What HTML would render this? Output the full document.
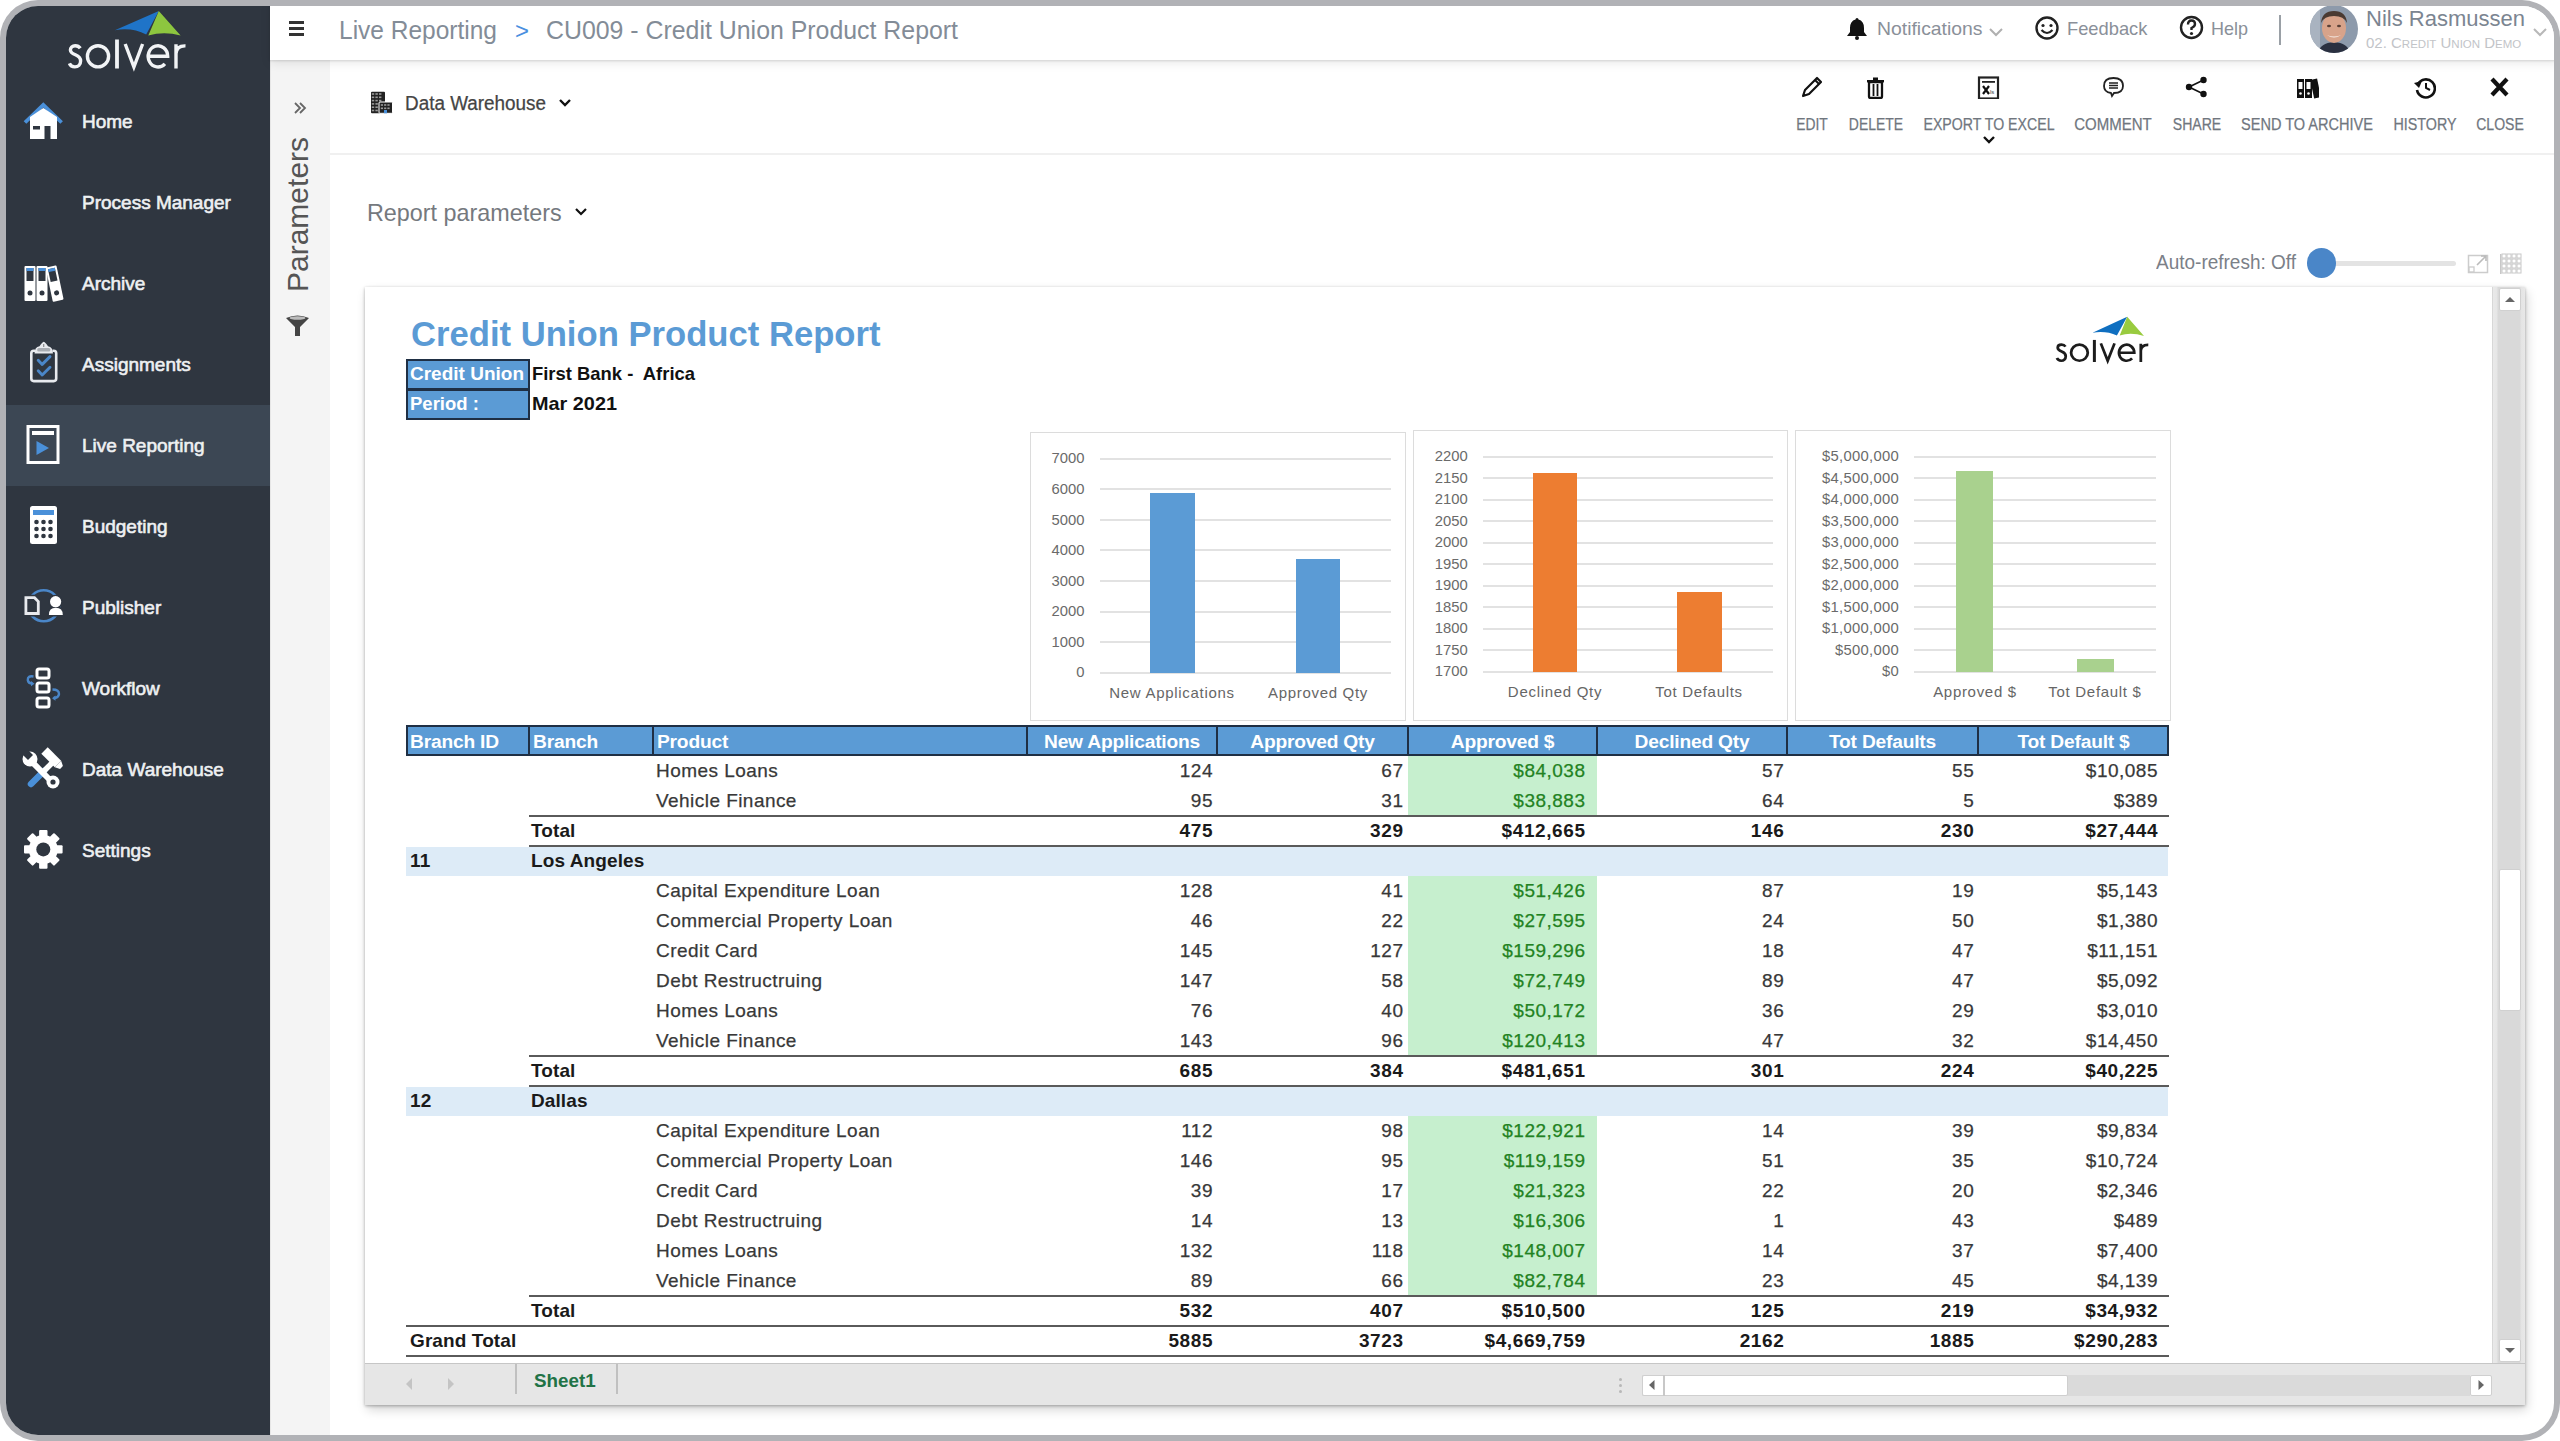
<!DOCTYPE html>
<html><head><meta charset="utf-8"><title>Credit Union Product Report</title>
<style>
html,body{margin:0;padding:0;background:#ffffff;width:2560px;height:1441px;overflow:hidden;}
body{font-family:'Liberation Sans',sans-serif;}
.frame{position:absolute;left:0;top:0;width:2560px;height:1441px;border-radius:38px;background:#b1b2b6;}
.inner{position:absolute;left:6px;top:6px;width:2548px;height:1429px;border-radius:32px;overflow:hidden;background:#ffffff;}
.page{position:absolute;left:-6px;top:-6px;width:2560px;height:1441px;}
</style></head>
<body>
<div class="frame"></div>
<div class="inner"><div class="page">
<div style="position:absolute;left:0px;top:0px;width:270px;height:1441px;background:#2f3640;"></div>
<div style="position:absolute;left:0px;top:405px;width:270px;height:81px;background:#3c4754;"></div>
<svg style="position:absolute;left:0;top:0" width="270" height="80"><path d="M114.9 30.2 L158.8 10.9 L146.2 34.5 Q132 27 114.9 30.2 Z" fill="#1f74c8"/><path d="M158.8 10.9 L180.6 35.5 Q164 31 148.3 35.5 Z" fill="#8dc63f"/><g fill="none" stroke="#f2f4f6" stroke-width="3.4"><path d="M80.3 48.3 C79 46.3 77.3 45.7 75.2 45.7 C72.3 45.7 70.4 47.5 70.4 49.9 C70.4 52.6 72.6 53.6 75.4 54.8 C78.6 56.1 80.6 57.6 80.6 61 C80.6 64.6 78.2 66.9 74.8 66.9 C72.2 66.9 70.3 65.6 69.4 63.4"/><ellipse cx="98" cy="56.3" rx="10.6" ry="10.6"/><path d="M117 39.4 V68.6" stroke-width="3.8"/><path d="M125.2 44 L133.9 67 L142.6 44" stroke-linejoin="miter"/><path d="M148.2 56.3 H167.7 A9.75 10.6 0 1 0 164.9 63.8"/><path d="M176 44.3 V68.6 M176 53.5 C176.5 47.5 180 45.7 185.5 45.9"/></g></svg>
<div style="position:absolute;top:111.92px;font-size:19px;line-height:19px;color:#eef0f2;font-weight:400;white-space:nowrap;left:82px;-webkit-text-stroke:0.6px #eef0f2;">Home</div>
<div style="position:absolute;top:192.92px;font-size:19px;line-height:19px;color:#eef0f2;font-weight:400;white-space:nowrap;left:82px;-webkit-text-stroke:0.6px #eef0f2;">Process Manager</div>
<div style="position:absolute;top:273.92px;font-size:19px;line-height:19px;color:#eef0f2;font-weight:400;white-space:nowrap;left:82px;-webkit-text-stroke:0.6px #eef0f2;">Archive</div>
<div style="position:absolute;top:354.92px;font-size:19px;line-height:19px;color:#eef0f2;font-weight:400;white-space:nowrap;left:82px;-webkit-text-stroke:0.6px #eef0f2;">Assignments</div>
<div style="position:absolute;top:435.92px;font-size:19px;line-height:19px;color:#eef0f2;font-weight:400;white-space:nowrap;left:82px;-webkit-text-stroke:0.6px #eef0f2;">Live Reporting</div>
<div style="position:absolute;top:516.92px;font-size:19px;line-height:19px;color:#eef0f2;font-weight:400;white-space:nowrap;left:82px;-webkit-text-stroke:0.6px #eef0f2;">Budgeting</div>
<div style="position:absolute;top:597.92px;font-size:19px;line-height:19px;color:#eef0f2;font-weight:400;white-space:nowrap;left:82px;-webkit-text-stroke:0.6px #eef0f2;">Publisher</div>
<div style="position:absolute;top:678.92px;font-size:19px;line-height:19px;color:#eef0f2;font-weight:400;white-space:nowrap;left:82px;-webkit-text-stroke:0.6px #eef0f2;">Workflow</div>
<div style="position:absolute;top:759.92px;font-size:19px;line-height:19px;color:#eef0f2;font-weight:400;white-space:nowrap;left:82px;-webkit-text-stroke:0.6px #eef0f2;">Data Warehouse</div>
<div style="position:absolute;top:840.92px;font-size:19px;line-height:19px;color:#eef0f2;font-weight:400;white-space:nowrap;left:82px;-webkit-text-stroke:0.6px #eef0f2;">Settings</div>
<svg style="position:absolute;left:0;top:0" width="270" height="1441"><path d="M25 122.5 L43.3 105 L61.6 122.5" fill="none" stroke="#4a90d9" stroke-width="3.8"/><path d="M30 117 L43.3 108 L57 117 L57 139 L30 139 Z" fill="#fff"/><rect x="44.5" y="126" width="6" height="13" fill="#2f3640"/><rect x="33" y="126" width="7" height="3.5" fill="#2f3640"/><g><rect x="24.5" y="266" width="11" height="35" rx="1" fill="#fff"/><rect x="36.5" y="266" width="11" height="35" rx="1" fill="#fff"/><g transform="rotate(-12 55 283)"><rect x="49" y="266" width="11" height="35" rx="1" fill="#fff"/><rect x="51" y="268" width="7" height="13" fill="#2f3640"/><rect x="51" y="268" width="7" height="3" fill="#4a90d9"/><circle cx="54.5" cy="293" r="2.5" fill="#2f3640"/></g><rect x="26.5" y="268" width="7" height="13" fill="#2f3640"/><rect x="26.5" y="268" width="7" height="3" fill="#4a90d9"/><rect x="38.5" y="268" width="7" height="13" fill="#2f3640"/><rect x="38.5" y="268" width="7" height="3" fill="#4a90d9"/><circle cx="30" cy="293" r="2.5" fill="#2f3640"/><circle cx="42" cy="293" r="2.5" fill="#2f3640"/></g><path d="M35 350.8 H33.8 Q31.3 350.8 31.3 353.3 V378.6 Q31.3 381.1 33.8 381.1 H53.7 Q56.2 381.1 56.2 378.6 V353.3 Q56.2 350.8 53.7 350.8 H52.5" stroke="#e8eaee" stroke-width="2.6" fill="none"/><path d="M34.6 353.6 Q34.4 347.3 39.5 346.3 Q42 342.3 43.75 341.8 Q45.5 342.3 48 346.3 Q53 347.3 52.9 353.6 Z" fill="#e8eaee"/><rect x="37.2" y="348" width="13.2" height="3.6" rx="1.6" fill="#a9adb3"/><path d="M43.75 344 V347" stroke="#555" stroke-width="0.8"/><path d="M38.2 360.2 L42.2 364.4 L50 356.6 M38.2 370.8 L42.2 375 L50 367.2" stroke="#4a86c8" stroke-width="2.9" fill="none" stroke-linecap="round" stroke-linejoin="round"/><rect x="28" y="426.5" width="30" height="36" fill="none" stroke="#fff" stroke-width="3"/><rect x="32" y="431" width="22" height="4" fill="#fff"/><path d="M36.5 441 L49 448 L36.5 455 Z" fill="#4a90d9"/><rect x="30" y="506" width="27" height="38" rx="2.5" fill="#fff"/><rect x="33" y="510" width="21" height="5" fill="#4a90d9"/><circle cx="36.5" cy="522" r="2.3" fill="#2f3640"/><circle cx="43.5" cy="522" r="2.3" fill="#2f3640"/><circle cx="50.5" cy="522" r="2.3" fill="#2f3640"/><circle cx="36.5" cy="529" r="2.3" fill="#2f3640"/><circle cx="43.5" cy="529" r="2.3" fill="#2f3640"/><circle cx="50.5" cy="529" r="2.3" fill="#2f3640"/><circle cx="36.5" cy="536" r="2.3" fill="#2f3640"/><circle cx="43.5" cy="536" r="2.3" fill="#2f3640"/><circle cx="50.5" cy="536" r="2.3" fill="#2f3640"/><circle cx="43.75" cy="605.8" r="15.5" fill="none" stroke="#4a86c8" stroke-width="2.6"/><path d="M25.9 597.7 L34.5 597.7 L38.3 601.5 L38.3 613.5 L25.9 613.5 Z" fill="#2f3640" stroke="#2f3640" stroke-width="6"/><path d="M25.9 597.7 L34.5 597.7 L38.3 601.5 L38.3 613.5 L25.9 613.5 Z" fill="none" stroke="#e8eaee" stroke-width="2.8" stroke-linejoin="miter"/><circle cx="55.4" cy="601.7" r="7" fill="#2f3640"/><path d="M47 616.5 Q47 606 55.8 606 Q64.5 606 64.5 616.5 Z" fill="#2f3640"/><circle cx="55.6" cy="601.7" r="5.6" fill="#fff"/><path d="M48.9 615 Q48.9 607.8 55.8 607.8 Q62.8 607.8 62.8 615 Z" fill="#fff"/><rect x="37" y="669" width="12" height="9" rx="2" fill="none" stroke="#fff" stroke-width="3"/><rect x="37" y="683" width="12" height="9" rx="2" fill="none" stroke="#fff" stroke-width="3"/><rect x="37" y="698" width="12" height="9" rx="2" fill="none" stroke="#fff" stroke-width="3"/><path d="M33.5 676.5 Q27.5 675.5 27.8 680 Q28.2 683.5 32.5 683.5" fill="none" stroke="#4a86c8" stroke-width="2.4"/><path d="M31 681 L34.5 683.8 L31 686.2 Z" fill="#4a86c8"/><path d="M52.5 689.5 Q59 689.5 59 694 Q58.5 698 53.5 698" fill="none" stroke="#4a86c8" stroke-width="2.4"/><path d="M55.5 695.5 L52 698.2 L55.5 700.8 Z" fill="#4a86c8"/><path d="M31 784 L44 771" stroke="#4a90d9" stroke-width="6.5" stroke-linecap="round"/><path d="M42 773 L53 762" stroke="#fff" stroke-width="5.5"/><g transform="translate(53 759) rotate(45)"><rect x="-12" y="-4.5" width="19" height="9" fill="#fff"/><path d="M7 -4.5 L12 -2 L12 2 L7 4.5 Z" fill="#fff"/></g><path d="M31 761 L52 782" stroke="#fff" stroke-width="6"/><circle cx="30" cy="759" r="7.5" fill="#fff"/><path d="M22 754 L28 760 L33 755 L27 749 Z" fill="#2f3640"/><circle cx="53" cy="782" r="6.5" fill="#fff"/><circle cx="53" cy="782" r="2.6" fill="#2f3640"/><g transform="translate(43.3 849.4)"><circle r="14.5" fill="#fff"/><rect x="-4.2" y="-19.3" width="8.4" height="8" rx="1" fill="#fff" transform="rotate(0)"/><rect x="-4.2" y="-19.3" width="8.4" height="8" rx="1" fill="#fff" transform="rotate(45)"/><rect x="-4.2" y="-19.3" width="8.4" height="8" rx="1" fill="#fff" transform="rotate(90)"/><rect x="-4.2" y="-19.3" width="8.4" height="8" rx="1" fill="#fff" transform="rotate(135)"/><rect x="-4.2" y="-19.3" width="8.4" height="8" rx="1" fill="#fff" transform="rotate(180)"/><rect x="-4.2" y="-19.3" width="8.4" height="8" rx="1" fill="#fff" transform="rotate(225)"/><rect x="-4.2" y="-19.3" width="8.4" height="8" rx="1" fill="#fff" transform="rotate(270)"/><rect x="-4.2" y="-19.3" width="8.4" height="8" rx="1" fill="#fff" transform="rotate(315)"/><circle r="7" fill="#2f3640"/></g></svg>
<div style="position:absolute;left:270px;top:0px;width:2290px;height:60px;background:#ffffff;box-shadow:0 1px 2px rgba(0,0,0,0.12), 0 3px 10px rgba(0,0,0,0.09);z-index:2;"></div>
<div style="position:absolute;left:0;top:0;width:2560px;height:60px;z-index:3">
<div style="position:absolute;left:289px;top:21px;width:15px;height:3px;background:#333;"></div>
<div style="position:absolute;left:289px;top:27px;width:15px;height:3px;background:#333;"></div>
<div style="position:absolute;left:289px;top:33px;width:15px;height:3px;background:#333;"></div>
<div style="position:absolute;top:17.91px;font-size:25.5px;line-height:25.5px;color:#838c97;font-weight:400;white-space:nowrap;left:339px;transform:scaleX(0.9609);transform-origin:left;">Live Reporting</div>
<div style="position:absolute;top:19.18px;font-size:24px;line-height:24px;color:#4a8fe0;font-weight:400;white-space:nowrap;left:515px;">&gt;</div>
<div style="position:absolute;top:17.91px;font-size:25.5px;line-height:25.5px;color:#838c97;font-weight:400;white-space:nowrap;left:546px;transform:scaleX(0.9755);transform-origin:left;">CU009 - Credit Union Product Report</div>
<svg style="position:absolute;left:1846px;top:16px" width="22" height="24" viewBox="0 0 22 24"><path d="M11 2 Q12.5 2 12.5 3.5 Q18 5 18 12 L18 16 L21 20 L1 20 L4 16 L4 12 Q4 5 9.5 3.5 Q9.5 2 11 2 Z" fill="#111"/><circle cx="11" cy="22" r="2" fill="#111"/></svg>
<div style="position:absolute;top:19.94px;font-size:18.5px;line-height:18.5px;color:#8a9099;font-weight:400;white-space:nowrap;left:1877px;transform:scaleX(1.047);transform-origin:left;">Notifications</div>
<svg style="position:absolute;left:1988px;top:26px" width="16" height="12" viewBox="0 0 16 12"><path d="M2 3 L8 9 L14 3" fill="none" stroke="#b0b0b0" stroke-width="2"/></svg>
<svg style="position:absolute;left:2034px;top:15px" width="26" height="26" viewBox="0 0 26 26"><circle cx="13" cy="13" r="10.5" fill="none" stroke="#222" stroke-width="2.4"/><circle cx="9" cy="10.5" r="1.6" fill="#222"/><circle cx="17" cy="10.5" r="1.6" fill="#222"/><path d="M7.5 15 Q13 21 18.5 15" fill="none" stroke="#222" stroke-width="2.2"/></svg>
<div style="position:absolute;top:19.94px;font-size:18.5px;line-height:18.5px;color:#8a9099;font-weight:400;white-space:nowrap;left:2067px;transform:scaleX(0.9895);transform-origin:left;">Feedback</div>
<svg style="position:absolute;left:2178px;top:14px" width="27" height="27" viewBox="0 0 27 27"><circle cx="13.5" cy="13.5" r="10.5" fill="none" stroke="#222" stroke-width="2.4"/><path d="M10 10.5 Q10 6.5 13.5 6.5 Q17 6.5 17 10 Q17 12.5 13.5 14 L13.5 16" fill="none" stroke="#222" stroke-width="2.4"/><circle cx="13.5" cy="19.5" r="1.6" fill="#222"/></svg>
<div style="position:absolute;top:19.94px;font-size:18.5px;line-height:18.5px;color:#8a9099;font-weight:400;white-space:nowrap;left:2211px;transform:scaleX(0.9721);transform-origin:left;">Help</div>
<div style="position:absolute;left:2279px;top:15px;width:2px;height:30px;background:#9aa0a6;"></div>
<svg style="position:absolute;left:2310px;top:5px" width="48" height="48" viewBox="0 0 48 48"><defs><clipPath id="av"><circle cx="24" cy="24" r="24"/></clipPath></defs><g clip-path="url(#av)"><rect width="48" height="48" fill="#8d9aab"/><rect x="0" y="0" width="10" height="48" fill="#a9b3c0"/><path d="M8 48 Q10 38 24 37 Q38 38 40 48 Z" fill="#2a3040"/><ellipse cx="24" cy="23" rx="12" ry="15" fill="#d8a38a"/><path d="M11 18 Q12 6 24 6 Q36 6 37 18 Q34 11 24 11 Q14 11 11 18 Z" fill="#4a3a32"/><ellipse cx="19" cy="21" rx="2" ry="1.2" fill="#5a4036"/><ellipse cx="29" cy="21" rx="2" ry="1.2" fill="#5a4036"/><path d="M17 30 Q24 35 31 30 Q24 33 17 30 Z" fill="#f5ece6"/></g></svg>
<div style="position:absolute;top:7.78px;font-size:22px;line-height:22px;color:#7b8591;font-weight:400;white-space:nowrap;left:2366px;transform:scaleX(1.0004);transform-origin:left;">Nils Rasmussen</div>
<div style="position:absolute;top:35.30px;font-size:15px;line-height:15px;color:#c2c4c8;font-weight:400;white-space:nowrap;left:2366px;">02. C<span style="font-size:11.5px">REDIT</span> U<span style="font-size:11.5px">NION</span> D<span style="font-size:11.5px">EMO</span></div>
<svg style="position:absolute;left:2532px;top:26px" width="16" height="12" viewBox="0 0 16 12"><path d="M2 3 L8 9 L14 3" fill="none" stroke="#b8b8b8" stroke-width="2"/></svg>
</div>
<div style="position:absolute;left:270px;top:60px;width:60px;height:1381px;background:#f4f4f4;border-left:1px solid #e6e6e6;box-sizing:border-box;"></div>
<svg style="position:absolute;left:293px;top:101px" width="14" height="14" viewBox="0 0 14 14"><path d="M2 2 L7 7 L2 12 M7 2 L12 7 L7 12" fill="none" stroke="#666" stroke-width="1.8"/></svg>
<div style="position:absolute;left:285.5px;top:292px;transform-origin:0 0;transform:rotate(-90deg);font-size:30px;line-height:30px;color:#555;white-space:nowrap;height:30px;"><span style="position:relative;top:-3px">Parameters</span></div>
<svg style="position:absolute;left:285px;top:314px" width="25" height="24" viewBox="0 0 25 24"><path d="M1 4 Q12.5 -1 24 4 L15 13 L15 22 L10 22 L10 13 Z" fill="#444"/><ellipse cx="12.5" cy="4" rx="8" ry="1.8" fill="#bbb"/></svg>
<div style="position:absolute;left:330px;top:153px;width:2224px;height:2px;background:#f0f0f0;"></div>
<svg style="position:absolute;left:370px;top:91px" width="24" height="24" viewBox="0 0 24 24"><rect x="1" y="0.8" width="14" height="21.5" rx="1" fill="#222"/><rect x="1.8" y="2.2" width="2.4" height="1.6" fill="#9a9a9a"/><rect x="5.4" y="2.2" width="2.4" height="1.6" fill="#9a9a9a"/><rect x="9.0" y="2.2" width="2.4" height="1.6" fill="#9a9a9a"/><rect x="1.8" y="5.5" width="2.4" height="1.6" fill="#9a9a9a"/><rect x="5.4" y="5.5" width="2.4" height="1.6" fill="#9a9a9a"/><rect x="9.0" y="5.5" width="2.4" height="1.6" fill="#9a9a9a"/><rect x="1.8" y="8.8" width="2.4" height="1.6" fill="#9a9a9a"/><rect x="5.4" y="8.8" width="2.4" height="1.6" fill="#9a9a9a"/><rect x="9.0" y="8.8" width="2.4" height="1.6" fill="#9a9a9a"/><rect x="1.8" y="12.1" width="2.4" height="1.6" fill="#9a9a9a"/><rect x="5.4" y="12.1" width="2.4" height="1.6" fill="#9a9a9a"/><rect x="9.0" y="12.1" width="2.4" height="1.6" fill="#9a9a9a"/><rect x="1.8" y="15.4" width="2.4" height="1.6" fill="#9a9a9a"/><rect x="5.4" y="15.4" width="2.4" height="1.6" fill="#9a9a9a"/><rect x="9.0" y="15.4" width="2.4" height="1.6" fill="#9a9a9a"/><rect x="1.8" y="18.7" width="2.4" height="1.6" fill="#9a9a9a"/><rect x="5.4" y="18.7" width="2.4" height="1.6" fill="#9a9a9a"/><rect x="9.0" y="18.7" width="2.4" height="1.6" fill="#9a9a9a"/><rect x="9" y="11" width="13.5" height="11.3" rx="1" fill="#222" stroke="#fff" stroke-width="1"/><rect x="10.8" y="13.2" width="2.2" height="1.6" fill="#9a9a9a"/><rect x="14.1" y="13.2" width="2.2" height="1.6" fill="#9a9a9a"/><rect x="17.4" y="13.2" width="2.2" height="1.6" fill="#9a9a9a"/><rect x="10.8" y="16.5" width="2.2" height="1.6" fill="#9a9a9a"/><rect x="14.1" y="16.5" width="2.2" height="1.6" fill="#9a9a9a"/><rect x="17.4" y="16.5" width="2.2" height="1.6" fill="#9a9a9a"/><rect x="14" y="19" width="3" height="3.3" fill="#4a90d9"/></svg>
<div style="position:absolute;top:93.07px;font-size:20px;line-height:20px;color:#444;font-weight:400;white-space:nowrap;left:405px;transform:scaleX(0.9441);transform-origin:left;-webkit-text-stroke:0.25px #444;">Data Warehouse</div>
<svg style="position:absolute;left:558px;top:97px" width="14" height="12" viewBox="0 0 14 12"><path d="M2 3 L7 8 L12 3" fill="none" stroke="#111" stroke-width="2.4"/></svg>
<div style="position:absolute;top:116.03px;font-size:16.5px;line-height:16.5px;color:#70767e;font-weight:400;white-space:nowrap;left:1811.75px;transform:translateX(-50%) scaleX(0.8379);-webkit-text-stroke:0.25px #70767e;">EDIT</div>
<div style="position:absolute;top:116.03px;font-size:16.5px;line-height:16.5px;color:#70767e;font-weight:400;white-space:nowrap;left:1875.875px;transform:translateX(-50%) scaleX(0.8452);-webkit-text-stroke:0.25px #70767e;">DELETE</div>
<div style="position:absolute;top:116.03px;font-size:16.5px;line-height:16.5px;color:#70767e;font-weight:400;white-space:nowrap;left:1988.5px;transform:translateX(-50%) scaleX(0.8571);-webkit-text-stroke:0.25px #70767e;">EXPORT TO EXCEL</div>
<div style="position:absolute;top:116.03px;font-size:16.5px;line-height:16.5px;color:#70767e;font-weight:400;white-space:nowrap;left:2113.15px;transform:translateX(-50%) scaleX(0.9091);-webkit-text-stroke:0.25px #70767e;">COMMENT</div>
<div style="position:absolute;top:116.03px;font-size:16.5px;line-height:16.5px;color:#70767e;font-weight:400;white-space:nowrap;left:2196.75px;transform:translateX(-50%) scaleX(0.853);-webkit-text-stroke:0.25px #70767e;">SHARE</div>
<div style="position:absolute;top:116.03px;font-size:16.5px;line-height:16.5px;color:#70767e;font-weight:400;white-space:nowrap;left:2307.0px;transform:translateX(-50%) scaleX(0.8814);-webkit-text-stroke:0.25px #70767e;">SEND TO ARCHIVE</div>
<div style="position:absolute;top:116.03px;font-size:16.5px;line-height:16.5px;color:#70767e;font-weight:400;white-space:nowrap;left:2424.5px;transform:translateX(-50%) scaleX(0.866);-webkit-text-stroke:0.25px #70767e;">HISTORY</div>
<div style="position:absolute;top:116.03px;font-size:16.5px;line-height:16.5px;color:#70767e;font-weight:400;white-space:nowrap;left:2499.8px;transform:translateX(-50%) scaleX(0.8509);-webkit-text-stroke:0.25px #70767e;">CLOSE</div>
<svg style="position:absolute;left:1800px;top:76px" width="23" height="23" viewBox="0 0 23 23"><path d="M3 20 L5 14 L17 2 L21 6 L9 18 Z" fill="none" stroke="#111" stroke-width="2.2" stroke-linejoin="round"/><path d="M15 4 L19 8" stroke="#111" stroke-width="2"/></svg>
<svg style="position:absolute;left:1864px;top:76px" width="23" height="23" viewBox="0 0 23 23"><rect x="5" y="6" width="13" height="16" rx="1.5" fill="none" stroke="#111" stroke-width="2.3"/><rect x="3" y="4" width="17" height="2.5" fill="#111"/><rect x="9" y="1.5" width="5" height="3" fill="#111"/><path d="M9.5 8 V20 M13.5 8 V20" stroke="#111" stroke-width="1.8"/></svg>
<svg style="position:absolute;left:1977px;top:76px" width="23" height="23" viewBox="0 0 23 23"><rect x="2" y="1.5" width="19" height="21" fill="none" stroke="#222" stroke-width="2.2"/><rect x="5" y="5" width="13" height="1.8" fill="#222"/><path d="M6 10 L12 18 M12 10 L6 18" stroke="#111" stroke-width="2.2"/><text x="13" y="18" font-size="6" fill="#444" font-family="Liberation Sans">ls</text></svg>
<svg style="position:absolute;left:2102px;top:76px" width="23" height="23" viewBox="0 0 23 23"><path d="M11.5 2 Q21 2 21 10 Q21 17 12 17 L10 20 L9 17 Q2 16 2 10 Q2 2 11.5 2 Z" fill="none" stroke="#222" stroke-width="1.8"/><path d="M7 7 H16 M7 9.5 H16 M7 12 H16" stroke="#222" stroke-width="1.5"/></svg>
<svg style="position:absolute;left:2185px;top:76px" width="23" height="23" viewBox="0 0 23 23"><circle cx="4" cy="11" r="3.2" fill="#111"/><circle cx="18.5" cy="4" r="3.2" fill="#111"/><circle cx="18.5" cy="18" r="3.2" fill="#111"/><path d="M4 11 L18.5 4 M4 11 L18.5 18" stroke="#111" stroke-width="1.6"/></svg>
<svg style="position:absolute;left:2296px;top:76px" width="23" height="23" viewBox="0 0 23 23"><rect x="1" y="3" width="7" height="19" fill="#111"/><rect x="9" y="3" width="7" height="19" fill="#111"/><g transform="rotate(-12 20 12)"><rect x="16" y="3" width="7" height="19" fill="#111"/></g><rect x="2.5" y="6" width="4" height="7" fill="#fff"/><rect x="10.5" y="6" width="4" height="7" fill="#fff"/><circle cx="4.5" cy="17.5" r="1.3" fill="#fff"/><circle cx="12.5" cy="17.5" r="1.3" fill="#fff"/></svg>
<svg style="position:absolute;left:2413px;top:76px" width="23" height="23" viewBox="0 0 23 23"><path d="M5 8 A9 9 0 1 1 4 14" fill="none" stroke="#111" stroke-width="2.6"/><path d="M1 7 L6 12 L9 5 Z" fill="#111"/><path d="M13 7 V12 L17 14" fill="none" stroke="#111" stroke-width="2"/></svg>
<svg style="position:absolute;left:2488px;top:76px" width="23" height="23" viewBox="0 0 23 23"><path d="M4 3 L19 19 M19 3 L4 19" stroke="#111" stroke-width="4.2"/></svg>
<svg style="position:absolute;left:1982px;top:135px" width="14" height="10" viewBox="0 0 14 10"><path d="M2 2 L7 7 L12 2" fill="none" stroke="#111" stroke-width="2.4"/></svg>
<div style="position:absolute;top:202.02px;font-size:23.6px;line-height:23.6px;color:#75797e;font-weight:400;white-space:nowrap;left:367px;transform:scaleX(0.9898);transform-origin:left;">Report parameters</div>
<svg style="position:absolute;left:574px;top:206px" width="14" height="12" viewBox="0 0 14 12"><path d="M2 3 L7 8 L12 3" fill="none" stroke="#111" stroke-width="2.2"/></svg>
<div style="position:absolute;top:252.89px;font-size:19.5px;line-height:19.5px;color:#7b8088;font-weight:400;white-space:nowrap;left:2156.4px;transform:scaleX(0.9736);transform-origin:left;">Auto-refresh: Off</div>
<div style="position:absolute;left:2321px;top:260.5px;width:135px;height:5px;background:#e3e3e3;border-radius:3px;"></div>
<div style="position:absolute;left:2306.5px;top:248px;width:29.5px;height:29.5px;border-radius:50%;background:#4a86c8"></div>
<svg style="position:absolute;left:2467px;top:252px" width="24" height="22" viewBox="0 0 24 22"><rect x="1.5" y="3.5" width="19" height="17" fill="none" stroke="#ccc" stroke-width="1.5"/><path d="M10 13 L19 4 M14 4 H19 V9" fill="none" stroke="#bbb" stroke-width="1.6"/><rect x="2" y="15" width="5" height="5" fill="none" stroke="#ccc" stroke-width="1.3"/></svg>
<svg style="position:absolute;left:2500px;top:251px" width="23" height="24" viewBox="0 0 23 24"><rect x="2" y="3" width="4" height="4" fill="none" stroke="#c8c8c8" stroke-width="1"/><rect x="7" y="3" width="4" height="4" fill="none" stroke="#c8c8c8" stroke-width="1"/><rect x="12" y="3" width="4" height="4" fill="none" stroke="#c8c8c8" stroke-width="1"/><rect x="17" y="3" width="4" height="4" fill="none" stroke="#c8c8c8" stroke-width="1"/><rect x="2" y="8" width="4" height="4" fill="none" stroke="#c8c8c8" stroke-width="1"/><rect x="7" y="8" width="4" height="4" fill="none" stroke="#c8c8c8" stroke-width="1"/><rect x="12" y="8" width="4" height="4" fill="none" stroke="#c8c8c8" stroke-width="1"/><rect x="17" y="8" width="4" height="4" fill="none" stroke="#c8c8c8" stroke-width="1"/><rect x="2" y="13" width="4" height="4" fill="none" stroke="#c8c8c8" stroke-width="1"/><rect x="7" y="13" width="4" height="4" fill="none" stroke="#c8c8c8" stroke-width="1"/><rect x="12" y="13" width="4" height="4" fill="none" stroke="#c8c8c8" stroke-width="1"/><rect x="17" y="13" width="4" height="4" fill="none" stroke="#c8c8c8" stroke-width="1"/><rect x="2" y="18" width="4" height="4" fill="none" stroke="#c8c8c8" stroke-width="1"/><rect x="7" y="18" width="4" height="4" fill="none" stroke="#c8c8c8" stroke-width="1"/><rect x="12" y="18" width="4" height="4" fill="none" stroke="#c8c8c8" stroke-width="1"/><rect x="17" y="18" width="4" height="4" fill="none" stroke="#c8c8c8" stroke-width="1"/><rect x="0" y="3" width="1.5" height="20" fill="#c8c8c8"/></svg>
<div style="position:absolute;left:365px;top:287px;width:2160px;height:1118px;background:#ffffff;box-shadow:0px 1px 3px rgba(0,0,0,0.30), 2px 5px 10px rgba(0,0,0,0.16);"></div>
<div style="position:absolute;left:2492px;top:287px;width:33px;height:1077px;background:linear-gradient(to right, #cfcfcf 0px, #e9e9e9 1.5px, #e6e6e6 5px, #d9d9d9 6px, #d9d9d9 28px, #e4e4e4 29px, #e8e8e8 33px);"></div>
<div style="position:absolute;left:2498.5px;top:288px;width:22.5px;height:23px;background:#ffffff;border:1px solid #d0d0d0;box-sizing:border-box;border-radius:2px;"></div>
<svg style="position:absolute;left:2503px;top:293px" width="14" height="12" viewBox="0 0 14 12"><path d="M2 9 L7 4 L12 9 Z" fill="#666"/></svg>
<div style="position:absolute;left:2498.5px;top:1339px;width:22.5px;height:23px;background:#ffffff;border:1px solid #d0d0d0;box-sizing:border-box;border-radius:2px;"></div>
<svg style="position:absolute;left:2503px;top:1345px" width="14" height="12" viewBox="0 0 14 12"><path d="M2 3 L7 8 L12 3 Z" fill="#666"/></svg>
<div style="position:absolute;left:2498.5px;top:869px;width:22.5px;height:142px;background:#ffffff;border:1px solid #d0d0d0;box-sizing:border-box;border-radius:2px;"></div>
<div style="position:absolute;left:365px;top:1363px;width:2160px;height:42px;background:#e6e6e6;border-top:1px solid #c6c6c6;box-sizing:border-box;"></div>
<svg style="position:absolute;left:402px;top:1376px" width="14" height="16" viewBox="0 0 14 16"><path d="M10 2 L4 8 L10 14 Z" fill="#c4c4c4"/></svg>
<svg style="position:absolute;left:444px;top:1376px" width="14" height="16" viewBox="0 0 14 16"><path d="M4 2 L10 8 L4 14 Z" fill="#c4c4c4"/></svg>
<div style="position:absolute;left:515px;top:1364px;width:2px;height:30px;background:#c0c0c0;"></div>
<div style="position:absolute;left:616px;top:1364px;width:2px;height:30px;background:#c0c0c0;"></div>
<div style="position:absolute;top:1371.59px;font-size:18.8px;line-height:18.8px;color:#217346;font-weight:700;white-space:nowrap;left:534px;">Sheet1</div>
<div style="position:absolute;left:1618.5px;top:1377.5px;width:3px;height:3px;background:#b8b8b8;border-radius:50%;"></div>
<div style="position:absolute;left:1618.5px;top:1383.5px;width:3px;height:3px;background:#b8b8b8;border-radius:50%;"></div>
<div style="position:absolute;left:1618.5px;top:1389.5px;width:3px;height:3px;background:#b8b8b8;border-radius:50%;"></div>
<div style="position:absolute;left:1641.5px;top:1374.5px;width:828px;height:21.5px;background:#dadada;"></div>
<div style="position:absolute;left:1641.5px;top:1374.5px;width:426px;height:21.5px;background:#ffffff;border:1px solid #cfcfcf;box-sizing:border-box;border-radius:2px;"></div>
<div style="position:absolute;left:1663px;top:1374.5px;width:1.5px;height:21.5px;background:#c8c8c8;"></div>
<svg style="position:absolute;left:1645px;top:1378px" width="14" height="14" viewBox="0 0 14 14"><path d="M9.5 2 L4 7 L9.5 12 Z" fill="#666"/></svg>
<div style="position:absolute;left:2469.5px;top:1374.5px;width:22.5px;height:21.5px;background:#ffffff;border:1px solid #cfcfcf;box-sizing:border-box;border-radius:2px;"></div>
<svg style="position:absolute;left:2474px;top:1378px" width="14" height="14" viewBox="0 0 14 14"><path d="M4.5 2 L10 7 L4.5 12 Z" fill="#666"/></svg>
<div style="position:absolute;top:316.57px;font-size:34.3px;line-height:34.3px;color:#5b9bd5;font-weight:700;white-space:nowrap;left:410.6px;transform:scaleX(1.0099);transform-origin:left;">Credit Union Product Report</div>
<div style="position:absolute;left:406px;top:358.5px;width:123.5px;height:61px;background:#5b9bd5;border:2px solid #1f2f44;box-sizing:border-box;"></div>
<div style="position:absolute;left:406px;top:388px;width:123.5px;height:2.5px;background:#1f2f44;"></div>
<div style="position:absolute;top:365.34px;font-size:18.5px;line-height:18.5px;color:#ffffff;font-weight:700;white-space:nowrap;left:410px;transform:scaleX(1.027);transform-origin:left;">Credit Union</div>
<div style="position:absolute;top:394.94px;font-size:18.5px;line-height:18.5px;color:#ffffff;font-weight:700;white-space:nowrap;left:410px;">Period :</div>
<div style="position:absolute;top:365.34px;font-size:18.5px;line-height:18.5px;color:#111;font-weight:700;white-space:nowrap;left:532px;transform:scaleX(0.995);transform-origin:left;">First Bank -&nbsp; Africa</div>
<div style="position:absolute;top:394.94px;font-size:18.5px;line-height:18.5px;color:#111;font-weight:700;white-space:nowrap;left:532px;transform:scaleX(1.0732);transform-origin:left;">Mar 2021</div>
<svg style="position:absolute;left:2000px;top:300px;overflow:visible" width="200" height="80" viewBox="2000 300 200 80"><path d="M2092.5 332.7 L2127.2 316.7 L2116.9 335.5 Q2106 330.5 2092.5 332.7 Z" fill="#0f6fc0"/><path d="M2127.2 316.7 L2144 336 Q2131 332 2119.7 335.5 Z" fill="#99cb3f"/><g transform="translate(2002.305 310.138) scale(0.787 0.756)" fill="none" stroke="#1c1c1c" stroke-width="3.5"><path d="M80.3 48.3 C79 46.3 77.3 45.7 75.2 45.7 C72.3 45.7 70.4 47.5 70.4 49.9 C70.4 52.6 72.6 53.6 75.4 54.8 C78.6 56.1 80.6 57.6 80.6 61 C80.6 64.6 78.2 66.9 74.8 66.9 C72.2 66.9 70.3 65.6 69.4 63.4"/><ellipse cx="98" cy="56.3" rx="10.6" ry="10.6"/><path d="M117 39.4 V68.6" stroke-width="3.8"/><path d="M125.2 44 L133.9 67 L142.6 44" stroke-linejoin="miter"/><path d="M148.2 56.3 H167.7 A9.75 10.6 0 1 0 164.9 63.8"/><path d="M176 44.3 V68.6 M176 53.5 C176.5 47.5 180 45.7 185.5 45.9"/></g></svg>
<div style="position:absolute;left:1030px;top:432px;width:376px;height:289px;background:#ffffff;border:1.5px solid #dcdcdc;box-sizing:border-box;"></div>
<div style="position:absolute;left:1413px;top:430px;width:374.5px;height:290.5px;background:#ffffff;border:1.5px solid #dcdcdc;box-sizing:border-box;"></div>
<div style="position:absolute;left:1794.5px;top:430px;width:376.0px;height:290.5px;background:#ffffff;border:1.5px solid #dcdcdc;box-sizing:border-box;"></div>
<div style="position:absolute;left:1100px;top:672px;width:291px;height:2px;background:#e2e2e2;"></div>
<div style="position:absolute;top:665.47px;font-size:14.8px;line-height:14.8px;color:#6a6a6a;font-weight:400;white-space:nowrap;right:1475.50px;">0</div>
<div style="position:absolute;left:1100px;top:641px;width:291px;height:2px;background:#e2e2e2;"></div>
<div style="position:absolute;top:634.90px;font-size:14.8px;line-height:14.8px;color:#6a6a6a;font-weight:400;white-space:nowrap;right:1475.50px;">1000</div>
<div style="position:absolute;left:1100px;top:611px;width:291px;height:2px;background:#e2e2e2;"></div>
<div style="position:absolute;top:604.33px;font-size:14.8px;line-height:14.8px;color:#6a6a6a;font-weight:400;white-space:nowrap;right:1475.50px;">2000</div>
<div style="position:absolute;left:1100px;top:580px;width:291px;height:2px;background:#e2e2e2;"></div>
<div style="position:absolute;top:573.76px;font-size:14.8px;line-height:14.8px;color:#6a6a6a;font-weight:400;white-space:nowrap;right:1475.50px;">3000</div>
<div style="position:absolute;left:1100px;top:549px;width:291px;height:2px;background:#e2e2e2;"></div>
<div style="position:absolute;top:543.19px;font-size:14.8px;line-height:14.8px;color:#6a6a6a;font-weight:400;white-space:nowrap;right:1475.50px;">4000</div>
<div style="position:absolute;left:1100px;top:519px;width:291px;height:2px;background:#e2e2e2;"></div>
<div style="position:absolute;top:512.62px;font-size:14.8px;line-height:14.8px;color:#6a6a6a;font-weight:400;white-space:nowrap;right:1475.50px;">5000</div>
<div style="position:absolute;left:1100px;top:488px;width:291px;height:2px;background:#e2e2e2;"></div>
<div style="position:absolute;top:482.05px;font-size:14.8px;line-height:14.8px;color:#6a6a6a;font-weight:400;white-space:nowrap;right:1475.50px;">6000</div>
<div style="position:absolute;left:1100px;top:458px;width:291px;height:2px;background:#e2e2e2;"></div>
<div style="position:absolute;top:451.48px;font-size:14.8px;line-height:14.8px;color:#6a6a6a;font-weight:400;white-space:nowrap;right:1475.50px;">7000</div>
<div style="position:absolute;left:1149.7px;top:492.8px;width:45.6px;height:179.90000000000003px;background:#5b9bd5;"></div>
<div style="position:absolute;left:1295.9px;top:558.9px;width:44.5px;height:113.80000000000007px;background:#5b9bd5;"></div>
<div style="position:absolute;top:685.30px;font-size:15px;line-height:15px;color:#666666;font-weight:400;white-space:nowrap;left:1172px;transform:translateX(-50%);letter-spacing:0.7px;">New Applications</div>
<div style="position:absolute;top:685.30px;font-size:15px;line-height:15px;color:#666666;font-weight:400;white-space:nowrap;left:1318px;transform:translateX(-50%);letter-spacing:0.7px;">Approved Qty</div>
<div style="position:absolute;left:1483px;top:671px;width:290px;height:2px;background:#e2e2e2;"></div>
<div style="position:absolute;top:664.37px;font-size:14.8px;line-height:14.8px;color:#6a6a6a;font-weight:400;white-space:nowrap;right:1092.30px;">1700</div>
<div style="position:absolute;left:1483px;top:649px;width:290px;height:2px;background:#e2e2e2;"></div>
<div style="position:absolute;top:642.87px;font-size:14.8px;line-height:14.8px;color:#6a6a6a;font-weight:400;white-space:nowrap;right:1092.30px;">1750</div>
<div style="position:absolute;left:1483px;top:628px;width:290px;height:2px;background:#e2e2e2;"></div>
<div style="position:absolute;top:621.37px;font-size:14.8px;line-height:14.8px;color:#6a6a6a;font-weight:400;white-space:nowrap;right:1092.30px;">1800</div>
<div style="position:absolute;left:1483px;top:606px;width:290px;height:2px;background:#e2e2e2;"></div>
<div style="position:absolute;top:599.87px;font-size:14.8px;line-height:14.8px;color:#6a6a6a;font-weight:400;white-space:nowrap;right:1092.30px;">1850</div>
<div style="position:absolute;left:1483px;top:585px;width:290px;height:2px;background:#e2e2e2;"></div>
<div style="position:absolute;top:578.37px;font-size:14.8px;line-height:14.8px;color:#6a6a6a;font-weight:400;white-space:nowrap;right:1092.30px;">1900</div>
<div style="position:absolute;left:1483px;top:563px;width:290px;height:2px;background:#e2e2e2;"></div>
<div style="position:absolute;top:556.87px;font-size:14.8px;line-height:14.8px;color:#6a6a6a;font-weight:400;white-space:nowrap;right:1092.30px;">1950</div>
<div style="position:absolute;left:1483px;top:542px;width:290px;height:2px;background:#e2e2e2;"></div>
<div style="position:absolute;top:535.37px;font-size:14.8px;line-height:14.8px;color:#6a6a6a;font-weight:400;white-space:nowrap;right:1092.30px;">2000</div>
<div style="position:absolute;left:1483px;top:520px;width:290px;height:2px;background:#e2e2e2;"></div>
<div style="position:absolute;top:513.87px;font-size:14.8px;line-height:14.8px;color:#6a6a6a;font-weight:400;white-space:nowrap;right:1092.30px;">2050</div>
<div style="position:absolute;left:1483px;top:499px;width:290px;height:2px;background:#e2e2e2;"></div>
<div style="position:absolute;top:492.37px;font-size:14.8px;line-height:14.8px;color:#6a6a6a;font-weight:400;white-space:nowrap;right:1092.30px;">2100</div>
<div style="position:absolute;left:1483px;top:477px;width:290px;height:2px;background:#e2e2e2;"></div>
<div style="position:absolute;top:470.87px;font-size:14.8px;line-height:14.8px;color:#6a6a6a;font-weight:400;white-space:nowrap;right:1092.30px;">2150</div>
<div style="position:absolute;left:1483px;top:456px;width:290px;height:2px;background:#e2e2e2;"></div>
<div style="position:absolute;top:449.37px;font-size:14.8px;line-height:14.8px;color:#6a6a6a;font-weight:400;white-space:nowrap;right:1092.30px;">2200</div>
<div style="position:absolute;left:1533.3px;top:472.9px;width:44.1px;height:198.70000000000005px;background:#ed7d31;"></div>
<div style="position:absolute;left:1677.4px;top:592px;width:44.8px;height:79.60000000000002px;background:#ed7d31;"></div>
<div style="position:absolute;top:684.30px;font-size:15px;line-height:15px;color:#666666;font-weight:400;white-space:nowrap;left:1555px;transform:translateX(-50%);letter-spacing:0.7px;">Declined Qty</div>
<div style="position:absolute;top:684.30px;font-size:15px;line-height:15px;color:#666666;font-weight:400;white-space:nowrap;left:1699px;transform:translateX(-50%);letter-spacing:0.7px;">Tot Defaults</div>
<div style="position:absolute;left:1914px;top:671px;width:242px;height:2px;background:#e2e2e2;"></div>
<div style="position:absolute;top:664.37px;font-size:14.8px;line-height:14.8px;color:#6a6a6a;font-weight:400;white-space:nowrap;right:661.00px;letter-spacing:0.3px;">$0</div>
<div style="position:absolute;left:1914px;top:649px;width:242px;height:2px;background:#e2e2e2;"></div>
<div style="position:absolute;top:642.87px;font-size:14.8px;line-height:14.8px;color:#6a6a6a;font-weight:400;white-space:nowrap;right:661.00px;letter-spacing:0.3px;">$500,000</div>
<div style="position:absolute;left:1914px;top:628px;width:242px;height:2px;background:#e2e2e2;"></div>
<div style="position:absolute;top:621.37px;font-size:14.8px;line-height:14.8px;color:#6a6a6a;font-weight:400;white-space:nowrap;right:661.00px;letter-spacing:0.3px;">$1,000,000</div>
<div style="position:absolute;left:1914px;top:606px;width:242px;height:2px;background:#e2e2e2;"></div>
<div style="position:absolute;top:599.87px;font-size:14.8px;line-height:14.8px;color:#6a6a6a;font-weight:400;white-space:nowrap;right:661.00px;letter-spacing:0.3px;">$1,500,000</div>
<div style="position:absolute;left:1914px;top:585px;width:242px;height:2px;background:#e2e2e2;"></div>
<div style="position:absolute;top:578.37px;font-size:14.8px;line-height:14.8px;color:#6a6a6a;font-weight:400;white-space:nowrap;right:661.00px;letter-spacing:0.3px;">$2,000,000</div>
<div style="position:absolute;left:1914px;top:563px;width:242px;height:2px;background:#e2e2e2;"></div>
<div style="position:absolute;top:556.87px;font-size:14.8px;line-height:14.8px;color:#6a6a6a;font-weight:400;white-space:nowrap;right:661.00px;letter-spacing:0.3px;">$2,500,000</div>
<div style="position:absolute;left:1914px;top:542px;width:242px;height:2px;background:#e2e2e2;"></div>
<div style="position:absolute;top:535.37px;font-size:14.8px;line-height:14.8px;color:#6a6a6a;font-weight:400;white-space:nowrap;right:661.00px;letter-spacing:0.3px;">$3,000,000</div>
<div style="position:absolute;left:1914px;top:520px;width:242px;height:2px;background:#e2e2e2;"></div>
<div style="position:absolute;top:513.87px;font-size:14.8px;line-height:14.8px;color:#6a6a6a;font-weight:400;white-space:nowrap;right:661.00px;letter-spacing:0.3px;">$3,500,000</div>
<div style="position:absolute;left:1914px;top:499px;width:242px;height:2px;background:#e2e2e2;"></div>
<div style="position:absolute;top:492.37px;font-size:14.8px;line-height:14.8px;color:#6a6a6a;font-weight:400;white-space:nowrap;right:661.00px;letter-spacing:0.3px;">$4,000,000</div>
<div style="position:absolute;left:1914px;top:477px;width:242px;height:2px;background:#e2e2e2;"></div>
<div style="position:absolute;top:470.87px;font-size:14.8px;line-height:14.8px;color:#6a6a6a;font-weight:400;white-space:nowrap;right:661.00px;letter-spacing:0.3px;">$4,500,000</div>
<div style="position:absolute;left:1914px;top:456px;width:242px;height:2px;background:#e2e2e2;"></div>
<div style="position:absolute;top:449.37px;font-size:14.8px;line-height:14.8px;color:#6a6a6a;font-weight:400;white-space:nowrap;right:661.00px;letter-spacing:0.3px;">$5,000,000</div>
<div style="position:absolute;left:1956.3px;top:470.8px;width:36.7px;height:200.8px;background:#a9d18e;"></div>
<div style="position:absolute;left:2076.8px;top:659.1px;width:37.6px;height:12.5px;background:#a9d18e;"></div>
<div style="position:absolute;top:684.30px;font-size:15px;line-height:15px;color:#666666;font-weight:400;white-space:nowrap;left:1975px;transform:translateX(-50%);letter-spacing:0.7px;">Approved $</div>
<div style="position:absolute;top:684.30px;font-size:15px;line-height:15px;color:#666666;font-weight:400;white-space:nowrap;left:2095px;transform:translateX(-50%);letter-spacing:0.7px;">Tot Default $</div>
<div style="position:absolute;left:406px;top:725px;width:1763px;height:31px;background:#5b9bd5;border:2px solid #1f2f44;box-sizing:border-box;"></div>
<div style="position:absolute;left:528px;top:725px;width:2px;height:31px;background:#1f2f44;"></div>
<div style="position:absolute;left:652px;top:725px;width:2px;height:31px;background:#1f2f44;"></div>
<div style="position:absolute;left:1026px;top:725px;width:2px;height:31px;background:#1f2f44;"></div>
<div style="position:absolute;left:1216px;top:725px;width:2px;height:31px;background:#1f2f44;"></div>
<div style="position:absolute;left:1407px;top:725px;width:2px;height:31px;background:#1f2f44;"></div>
<div style="position:absolute;left:1596px;top:725px;width:2px;height:31px;background:#1f2f44;"></div>
<div style="position:absolute;left:1786px;top:725px;width:2px;height:31px;background:#1f2f44;"></div>
<div style="position:absolute;left:1977px;top:725px;width:2px;height:31px;background:#1f2f44;"></div>
<div style="position:absolute;top:731.55px;font-size:19.2px;line-height:19.2px;color:#ffffff;font-weight:700;white-space:nowrap;left:410px;letter-spacing:-0.2px;">Branch ID</div>
<div style="position:absolute;top:731.55px;font-size:19.2px;line-height:19.2px;color:#ffffff;font-weight:700;white-space:nowrap;left:533px;letter-spacing:-0.2px;">Branch</div>
<div style="position:absolute;top:731.55px;font-size:19.2px;line-height:19.2px;color:#ffffff;font-weight:700;white-space:nowrap;left:657px;letter-spacing:-0.2px;">Product</div>
<div style="position:absolute;top:731.55px;font-size:19.2px;line-height:19.2px;color:#ffffff;font-weight:700;white-space:nowrap;left:1122.0px;transform:translateX(-50%);letter-spacing:-0.2px;">New Applications</div>
<div style="position:absolute;top:731.55px;font-size:19.2px;line-height:19.2px;color:#ffffff;font-weight:700;white-space:nowrap;left:1312.5px;transform:translateX(-50%);letter-spacing:-0.2px;">Approved Qty</div>
<div style="position:absolute;top:731.55px;font-size:19.2px;line-height:19.2px;color:#ffffff;font-weight:700;white-space:nowrap;left:1502.5px;transform:translateX(-50%);letter-spacing:-0.2px;">Approved $</div>
<div style="position:absolute;top:731.55px;font-size:19.2px;line-height:19.2px;color:#ffffff;font-weight:700;white-space:nowrap;left:1692.0px;transform:translateX(-50%);letter-spacing:-0.2px;">Declined Qty</div>
<div style="position:absolute;top:731.55px;font-size:19.2px;line-height:19.2px;color:#ffffff;font-weight:700;white-space:nowrap;left:1882.5px;transform:translateX(-50%);letter-spacing:-0.2px;">Tot Defaults</div>
<div style="position:absolute;top:731.55px;font-size:19.2px;line-height:19.2px;color:#ffffff;font-weight:700;white-space:nowrap;left:2073.5px;transform:translateX(-50%);letter-spacing:-0.2px;">Tot Default $</div>
<div style="position:absolute;left:1408px;top:756px;width:189px;height:30px;background:#c6efce;"></div>
<div style="position:absolute;top:761.22px;font-size:19.0px;line-height:19.0px;color:#383838;font-weight:400;white-space:nowrap;left:656px;letter-spacing:0.45px;-webkit-text-stroke:0.25px #383838;">Homes Loans</div>
<div style="position:absolute;top:761.22px;font-size:19.0px;line-height:19.0px;color:#383838;font-weight:400;white-space:nowrap;right:1347.00px;letter-spacing:0.5px;-webkit-text-stroke:0.25px #383838;">124</div>
<div style="position:absolute;top:761.22px;font-size:19.0px;line-height:19.0px;color:#383838;font-weight:400;white-space:nowrap;right:1156.50px;letter-spacing:0.5px;-webkit-text-stroke:0.25px #383838;">67</div>
<div style="position:absolute;top:761.22px;font-size:19.0px;line-height:19.0px;color:#228222;font-weight:400;white-space:nowrap;right:974.50px;letter-spacing:0.5px;-webkit-text-stroke:0.25px #228222;">$84,038</div>
<div style="position:absolute;top:761.22px;font-size:19.0px;line-height:19.0px;color:#383838;font-weight:400;white-space:nowrap;right:775.75px;letter-spacing:0.5px;-webkit-text-stroke:0.25px #383838;">57</div>
<div style="position:absolute;top:761.22px;font-size:19.0px;line-height:19.0px;color:#383838;font-weight:400;white-space:nowrap;right:585.75px;letter-spacing:0.5px;-webkit-text-stroke:0.25px #383838;">55</div>
<div style="position:absolute;top:761.22px;font-size:19.0px;line-height:19.0px;color:#383838;font-weight:400;white-space:nowrap;right:402.00px;letter-spacing:0.5px;-webkit-text-stroke:0.25px #383838;">$10,085</div>
<div style="position:absolute;left:1408px;top:786px;width:189px;height:30px;background:#c6efce;"></div>
<div style="position:absolute;top:791.22px;font-size:19.0px;line-height:19.0px;color:#383838;font-weight:400;white-space:nowrap;left:656px;letter-spacing:0.45px;-webkit-text-stroke:0.25px #383838;">Vehicle Finance</div>
<div style="position:absolute;top:791.22px;font-size:19.0px;line-height:19.0px;color:#383838;font-weight:400;white-space:nowrap;right:1347.00px;letter-spacing:0.5px;-webkit-text-stroke:0.25px #383838;">95</div>
<div style="position:absolute;top:791.22px;font-size:19.0px;line-height:19.0px;color:#383838;font-weight:400;white-space:nowrap;right:1156.50px;letter-spacing:0.5px;-webkit-text-stroke:0.25px #383838;">31</div>
<div style="position:absolute;top:791.22px;font-size:19.0px;line-height:19.0px;color:#228222;font-weight:400;white-space:nowrap;right:974.50px;letter-spacing:0.5px;-webkit-text-stroke:0.25px #228222;">$38,883</div>
<div style="position:absolute;top:791.22px;font-size:19.0px;line-height:19.0px;color:#383838;font-weight:400;white-space:nowrap;right:775.75px;letter-spacing:0.5px;-webkit-text-stroke:0.25px #383838;">64</div>
<div style="position:absolute;top:791.22px;font-size:19.0px;line-height:19.0px;color:#383838;font-weight:400;white-space:nowrap;right:585.75px;letter-spacing:0.5px;-webkit-text-stroke:0.25px #383838;">5</div>
<div style="position:absolute;top:791.22px;font-size:19.0px;line-height:19.0px;color:#383838;font-weight:400;white-space:nowrap;right:402.00px;letter-spacing:0.5px;-webkit-text-stroke:0.25px #383838;">$389</div>
<div style="position:absolute;left:529px;top:815px;width:1640px;height:2px;background:#5a5a5a;"></div>
<div style="position:absolute;top:821.22px;font-size:19.0px;line-height:19.0px;color:#1a1a1a;font-weight:700;white-space:nowrap;left:531px;letter-spacing:0.1px;">Total</div>
<div style="position:absolute;top:821.22px;font-size:19.0px;line-height:19.0px;color:#1a1a1a;font-weight:700;white-space:nowrap;right:1346.90px;letter-spacing:0.6px;">475</div>
<div style="position:absolute;top:821.22px;font-size:19.0px;line-height:19.0px;color:#1a1a1a;font-weight:700;white-space:nowrap;right:1156.40px;letter-spacing:0.6px;">329</div>
<div style="position:absolute;top:821.22px;font-size:19.0px;line-height:19.0px;color:#1a1a1a;font-weight:700;white-space:nowrap;right:974.40px;letter-spacing:0.6px;">$412,665</div>
<div style="position:absolute;top:821.22px;font-size:19.0px;line-height:19.0px;color:#1a1a1a;font-weight:700;white-space:nowrap;right:775.65px;letter-spacing:0.6px;">146</div>
<div style="position:absolute;top:821.22px;font-size:19.0px;line-height:19.0px;color:#1a1a1a;font-weight:700;white-space:nowrap;right:585.65px;letter-spacing:0.6px;">230</div>
<div style="position:absolute;top:821.22px;font-size:19.0px;line-height:19.0px;color:#1a1a1a;font-weight:700;white-space:nowrap;right:401.90px;letter-spacing:0.6px;">$27,444</div>
<div style="position:absolute;left:406px;top:847px;width:1762px;height:29px;background:#ddebf7;"></div>
<div style="position:absolute;left:529px;top:845px;width:1640px;height:2px;background:#5a5a5a;"></div>
<div style="position:absolute;top:851.22px;font-size:19.0px;line-height:19.0px;color:#1a1a1a;font-weight:700;white-space:nowrap;left:410px;letter-spacing:0.3px;">11</div>
<div style="position:absolute;top:851.22px;font-size:19.0px;line-height:19.0px;color:#1a1a1a;font-weight:700;white-space:nowrap;left:531px;letter-spacing:0.1px;">Los Angeles</div>
<div style="position:absolute;left:1408px;top:876px;width:189px;height:30px;background:#c6efce;"></div>
<div style="position:absolute;top:881.22px;font-size:19.0px;line-height:19.0px;color:#383838;font-weight:400;white-space:nowrap;left:656px;letter-spacing:0.45px;-webkit-text-stroke:0.25px #383838;">Capital Expenditure Loan</div>
<div style="position:absolute;top:881.22px;font-size:19.0px;line-height:19.0px;color:#383838;font-weight:400;white-space:nowrap;right:1347.00px;letter-spacing:0.5px;-webkit-text-stroke:0.25px #383838;">128</div>
<div style="position:absolute;top:881.22px;font-size:19.0px;line-height:19.0px;color:#383838;font-weight:400;white-space:nowrap;right:1156.50px;letter-spacing:0.5px;-webkit-text-stroke:0.25px #383838;">41</div>
<div style="position:absolute;top:881.22px;font-size:19.0px;line-height:19.0px;color:#228222;font-weight:400;white-space:nowrap;right:974.50px;letter-spacing:0.5px;-webkit-text-stroke:0.25px #228222;">$51,426</div>
<div style="position:absolute;top:881.22px;font-size:19.0px;line-height:19.0px;color:#383838;font-weight:400;white-space:nowrap;right:775.75px;letter-spacing:0.5px;-webkit-text-stroke:0.25px #383838;">87</div>
<div style="position:absolute;top:881.22px;font-size:19.0px;line-height:19.0px;color:#383838;font-weight:400;white-space:nowrap;right:585.75px;letter-spacing:0.5px;-webkit-text-stroke:0.25px #383838;">19</div>
<div style="position:absolute;top:881.22px;font-size:19.0px;line-height:19.0px;color:#383838;font-weight:400;white-space:nowrap;right:402.00px;letter-spacing:0.5px;-webkit-text-stroke:0.25px #383838;">$5,143</div>
<div style="position:absolute;left:1408px;top:906px;width:189px;height:30px;background:#c6efce;"></div>
<div style="position:absolute;top:911.22px;font-size:19.0px;line-height:19.0px;color:#383838;font-weight:400;white-space:nowrap;left:656px;letter-spacing:0.45px;-webkit-text-stroke:0.25px #383838;">Commercial Property Loan</div>
<div style="position:absolute;top:911.22px;font-size:19.0px;line-height:19.0px;color:#383838;font-weight:400;white-space:nowrap;right:1347.00px;letter-spacing:0.5px;-webkit-text-stroke:0.25px #383838;">46</div>
<div style="position:absolute;top:911.22px;font-size:19.0px;line-height:19.0px;color:#383838;font-weight:400;white-space:nowrap;right:1156.50px;letter-spacing:0.5px;-webkit-text-stroke:0.25px #383838;">22</div>
<div style="position:absolute;top:911.22px;font-size:19.0px;line-height:19.0px;color:#228222;font-weight:400;white-space:nowrap;right:974.50px;letter-spacing:0.5px;-webkit-text-stroke:0.25px #228222;">$27,595</div>
<div style="position:absolute;top:911.22px;font-size:19.0px;line-height:19.0px;color:#383838;font-weight:400;white-space:nowrap;right:775.75px;letter-spacing:0.5px;-webkit-text-stroke:0.25px #383838;">24</div>
<div style="position:absolute;top:911.22px;font-size:19.0px;line-height:19.0px;color:#383838;font-weight:400;white-space:nowrap;right:585.75px;letter-spacing:0.5px;-webkit-text-stroke:0.25px #383838;">50</div>
<div style="position:absolute;top:911.22px;font-size:19.0px;line-height:19.0px;color:#383838;font-weight:400;white-space:nowrap;right:402.00px;letter-spacing:0.5px;-webkit-text-stroke:0.25px #383838;">$1,380</div>
<div style="position:absolute;left:1408px;top:936px;width:189px;height:30px;background:#c6efce;"></div>
<div style="position:absolute;top:941.22px;font-size:19.0px;line-height:19.0px;color:#383838;font-weight:400;white-space:nowrap;left:656px;letter-spacing:0.45px;-webkit-text-stroke:0.25px #383838;">Credit Card</div>
<div style="position:absolute;top:941.22px;font-size:19.0px;line-height:19.0px;color:#383838;font-weight:400;white-space:nowrap;right:1347.00px;letter-spacing:0.5px;-webkit-text-stroke:0.25px #383838;">145</div>
<div style="position:absolute;top:941.22px;font-size:19.0px;line-height:19.0px;color:#383838;font-weight:400;white-space:nowrap;right:1156.50px;letter-spacing:0.5px;-webkit-text-stroke:0.25px #383838;">127</div>
<div style="position:absolute;top:941.22px;font-size:19.0px;line-height:19.0px;color:#228222;font-weight:400;white-space:nowrap;right:974.50px;letter-spacing:0.5px;-webkit-text-stroke:0.25px #228222;">$159,296</div>
<div style="position:absolute;top:941.22px;font-size:19.0px;line-height:19.0px;color:#383838;font-weight:400;white-space:nowrap;right:775.75px;letter-spacing:0.5px;-webkit-text-stroke:0.25px #383838;">18</div>
<div style="position:absolute;top:941.22px;font-size:19.0px;line-height:19.0px;color:#383838;font-weight:400;white-space:nowrap;right:585.75px;letter-spacing:0.5px;-webkit-text-stroke:0.25px #383838;">47</div>
<div style="position:absolute;top:941.22px;font-size:19.0px;line-height:19.0px;color:#383838;font-weight:400;white-space:nowrap;right:402.00px;letter-spacing:0.5px;-webkit-text-stroke:0.25px #383838;">$11,151</div>
<div style="position:absolute;left:1408px;top:966px;width:189px;height:30px;background:#c6efce;"></div>
<div style="position:absolute;top:971.22px;font-size:19.0px;line-height:19.0px;color:#383838;font-weight:400;white-space:nowrap;left:656px;letter-spacing:0.45px;-webkit-text-stroke:0.25px #383838;">Debt Restructruing</div>
<div style="position:absolute;top:971.22px;font-size:19.0px;line-height:19.0px;color:#383838;font-weight:400;white-space:nowrap;right:1347.00px;letter-spacing:0.5px;-webkit-text-stroke:0.25px #383838;">147</div>
<div style="position:absolute;top:971.22px;font-size:19.0px;line-height:19.0px;color:#383838;font-weight:400;white-space:nowrap;right:1156.50px;letter-spacing:0.5px;-webkit-text-stroke:0.25px #383838;">58</div>
<div style="position:absolute;top:971.22px;font-size:19.0px;line-height:19.0px;color:#228222;font-weight:400;white-space:nowrap;right:974.50px;letter-spacing:0.5px;-webkit-text-stroke:0.25px #228222;">$72,749</div>
<div style="position:absolute;top:971.22px;font-size:19.0px;line-height:19.0px;color:#383838;font-weight:400;white-space:nowrap;right:775.75px;letter-spacing:0.5px;-webkit-text-stroke:0.25px #383838;">89</div>
<div style="position:absolute;top:971.22px;font-size:19.0px;line-height:19.0px;color:#383838;font-weight:400;white-space:nowrap;right:585.75px;letter-spacing:0.5px;-webkit-text-stroke:0.25px #383838;">47</div>
<div style="position:absolute;top:971.22px;font-size:19.0px;line-height:19.0px;color:#383838;font-weight:400;white-space:nowrap;right:402.00px;letter-spacing:0.5px;-webkit-text-stroke:0.25px #383838;">$5,092</div>
<div style="position:absolute;left:1408px;top:996px;width:189px;height:30px;background:#c6efce;"></div>
<div style="position:absolute;top:1001.22px;font-size:19.0px;line-height:19.0px;color:#383838;font-weight:400;white-space:nowrap;left:656px;letter-spacing:0.45px;-webkit-text-stroke:0.25px #383838;">Homes Loans</div>
<div style="position:absolute;top:1001.22px;font-size:19.0px;line-height:19.0px;color:#383838;font-weight:400;white-space:nowrap;right:1347.00px;letter-spacing:0.5px;-webkit-text-stroke:0.25px #383838;">76</div>
<div style="position:absolute;top:1001.22px;font-size:19.0px;line-height:19.0px;color:#383838;font-weight:400;white-space:nowrap;right:1156.50px;letter-spacing:0.5px;-webkit-text-stroke:0.25px #383838;">40</div>
<div style="position:absolute;top:1001.22px;font-size:19.0px;line-height:19.0px;color:#228222;font-weight:400;white-space:nowrap;right:974.50px;letter-spacing:0.5px;-webkit-text-stroke:0.25px #228222;">$50,172</div>
<div style="position:absolute;top:1001.22px;font-size:19.0px;line-height:19.0px;color:#383838;font-weight:400;white-space:nowrap;right:775.75px;letter-spacing:0.5px;-webkit-text-stroke:0.25px #383838;">36</div>
<div style="position:absolute;top:1001.22px;font-size:19.0px;line-height:19.0px;color:#383838;font-weight:400;white-space:nowrap;right:585.75px;letter-spacing:0.5px;-webkit-text-stroke:0.25px #383838;">29</div>
<div style="position:absolute;top:1001.22px;font-size:19.0px;line-height:19.0px;color:#383838;font-weight:400;white-space:nowrap;right:402.00px;letter-spacing:0.5px;-webkit-text-stroke:0.25px #383838;">$3,010</div>
<div style="position:absolute;left:1408px;top:1026px;width:189px;height:30px;background:#c6efce;"></div>
<div style="position:absolute;top:1031.22px;font-size:19.0px;line-height:19.0px;color:#383838;font-weight:400;white-space:nowrap;left:656px;letter-spacing:0.45px;-webkit-text-stroke:0.25px #383838;">Vehicle Finance</div>
<div style="position:absolute;top:1031.22px;font-size:19.0px;line-height:19.0px;color:#383838;font-weight:400;white-space:nowrap;right:1347.00px;letter-spacing:0.5px;-webkit-text-stroke:0.25px #383838;">143</div>
<div style="position:absolute;top:1031.22px;font-size:19.0px;line-height:19.0px;color:#383838;font-weight:400;white-space:nowrap;right:1156.50px;letter-spacing:0.5px;-webkit-text-stroke:0.25px #383838;">96</div>
<div style="position:absolute;top:1031.22px;font-size:19.0px;line-height:19.0px;color:#228222;font-weight:400;white-space:nowrap;right:974.50px;letter-spacing:0.5px;-webkit-text-stroke:0.25px #228222;">$120,413</div>
<div style="position:absolute;top:1031.22px;font-size:19.0px;line-height:19.0px;color:#383838;font-weight:400;white-space:nowrap;right:775.75px;letter-spacing:0.5px;-webkit-text-stroke:0.25px #383838;">47</div>
<div style="position:absolute;top:1031.22px;font-size:19.0px;line-height:19.0px;color:#383838;font-weight:400;white-space:nowrap;right:585.75px;letter-spacing:0.5px;-webkit-text-stroke:0.25px #383838;">32</div>
<div style="position:absolute;top:1031.22px;font-size:19.0px;line-height:19.0px;color:#383838;font-weight:400;white-space:nowrap;right:402.00px;letter-spacing:0.5px;-webkit-text-stroke:0.25px #383838;">$14,450</div>
<div style="position:absolute;left:529px;top:1055px;width:1640px;height:2px;background:#5a5a5a;"></div>
<div style="position:absolute;top:1061.22px;font-size:19.0px;line-height:19.0px;color:#1a1a1a;font-weight:700;white-space:nowrap;left:531px;letter-spacing:0.1px;">Total</div>
<div style="position:absolute;top:1061.22px;font-size:19.0px;line-height:19.0px;color:#1a1a1a;font-weight:700;white-space:nowrap;right:1346.90px;letter-spacing:0.6px;">685</div>
<div style="position:absolute;top:1061.22px;font-size:19.0px;line-height:19.0px;color:#1a1a1a;font-weight:700;white-space:nowrap;right:1156.40px;letter-spacing:0.6px;">384</div>
<div style="position:absolute;top:1061.22px;font-size:19.0px;line-height:19.0px;color:#1a1a1a;font-weight:700;white-space:nowrap;right:974.40px;letter-spacing:0.6px;">$481,651</div>
<div style="position:absolute;top:1061.22px;font-size:19.0px;line-height:19.0px;color:#1a1a1a;font-weight:700;white-space:nowrap;right:775.65px;letter-spacing:0.6px;">301</div>
<div style="position:absolute;top:1061.22px;font-size:19.0px;line-height:19.0px;color:#1a1a1a;font-weight:700;white-space:nowrap;right:585.65px;letter-spacing:0.6px;">224</div>
<div style="position:absolute;top:1061.22px;font-size:19.0px;line-height:19.0px;color:#1a1a1a;font-weight:700;white-space:nowrap;right:401.90px;letter-spacing:0.6px;">$40,225</div>
<div style="position:absolute;left:406px;top:1087px;width:1762px;height:29px;background:#ddebf7;"></div>
<div style="position:absolute;left:529px;top:1085px;width:1640px;height:2px;background:#5a5a5a;"></div>
<div style="position:absolute;top:1091.22px;font-size:19.0px;line-height:19.0px;color:#1a1a1a;font-weight:700;white-space:nowrap;left:410px;letter-spacing:0.3px;">12</div>
<div style="position:absolute;top:1091.22px;font-size:19.0px;line-height:19.0px;color:#1a1a1a;font-weight:700;white-space:nowrap;left:531px;letter-spacing:0.1px;">Dallas</div>
<div style="position:absolute;left:1408px;top:1116px;width:189px;height:30px;background:#c6efce;"></div>
<div style="position:absolute;top:1121.22px;font-size:19.0px;line-height:19.0px;color:#383838;font-weight:400;white-space:nowrap;left:656px;letter-spacing:0.45px;-webkit-text-stroke:0.25px #383838;">Capital Expenditure Loan</div>
<div style="position:absolute;top:1121.22px;font-size:19.0px;line-height:19.0px;color:#383838;font-weight:400;white-space:nowrap;right:1347.00px;letter-spacing:0.5px;-webkit-text-stroke:0.25px #383838;">112</div>
<div style="position:absolute;top:1121.22px;font-size:19.0px;line-height:19.0px;color:#383838;font-weight:400;white-space:nowrap;right:1156.50px;letter-spacing:0.5px;-webkit-text-stroke:0.25px #383838;">98</div>
<div style="position:absolute;top:1121.22px;font-size:19.0px;line-height:19.0px;color:#228222;font-weight:400;white-space:nowrap;right:974.50px;letter-spacing:0.5px;-webkit-text-stroke:0.25px #228222;">$122,921</div>
<div style="position:absolute;top:1121.22px;font-size:19.0px;line-height:19.0px;color:#383838;font-weight:400;white-space:nowrap;right:775.75px;letter-spacing:0.5px;-webkit-text-stroke:0.25px #383838;">14</div>
<div style="position:absolute;top:1121.22px;font-size:19.0px;line-height:19.0px;color:#383838;font-weight:400;white-space:nowrap;right:585.75px;letter-spacing:0.5px;-webkit-text-stroke:0.25px #383838;">39</div>
<div style="position:absolute;top:1121.22px;font-size:19.0px;line-height:19.0px;color:#383838;font-weight:400;white-space:nowrap;right:402.00px;letter-spacing:0.5px;-webkit-text-stroke:0.25px #383838;">$9,834</div>
<div style="position:absolute;left:1408px;top:1146px;width:189px;height:30px;background:#c6efce;"></div>
<div style="position:absolute;top:1151.22px;font-size:19.0px;line-height:19.0px;color:#383838;font-weight:400;white-space:nowrap;left:656px;letter-spacing:0.45px;-webkit-text-stroke:0.25px #383838;">Commercial Property Loan</div>
<div style="position:absolute;top:1151.22px;font-size:19.0px;line-height:19.0px;color:#383838;font-weight:400;white-space:nowrap;right:1347.00px;letter-spacing:0.5px;-webkit-text-stroke:0.25px #383838;">146</div>
<div style="position:absolute;top:1151.22px;font-size:19.0px;line-height:19.0px;color:#383838;font-weight:400;white-space:nowrap;right:1156.50px;letter-spacing:0.5px;-webkit-text-stroke:0.25px #383838;">95</div>
<div style="position:absolute;top:1151.22px;font-size:19.0px;line-height:19.0px;color:#228222;font-weight:400;white-space:nowrap;right:974.50px;letter-spacing:0.5px;-webkit-text-stroke:0.25px #228222;">$119,159</div>
<div style="position:absolute;top:1151.22px;font-size:19.0px;line-height:19.0px;color:#383838;font-weight:400;white-space:nowrap;right:775.75px;letter-spacing:0.5px;-webkit-text-stroke:0.25px #383838;">51</div>
<div style="position:absolute;top:1151.22px;font-size:19.0px;line-height:19.0px;color:#383838;font-weight:400;white-space:nowrap;right:585.75px;letter-spacing:0.5px;-webkit-text-stroke:0.25px #383838;">35</div>
<div style="position:absolute;top:1151.22px;font-size:19.0px;line-height:19.0px;color:#383838;font-weight:400;white-space:nowrap;right:402.00px;letter-spacing:0.5px;-webkit-text-stroke:0.25px #383838;">$10,724</div>
<div style="position:absolute;left:1408px;top:1176px;width:189px;height:30px;background:#c6efce;"></div>
<div style="position:absolute;top:1181.22px;font-size:19.0px;line-height:19.0px;color:#383838;font-weight:400;white-space:nowrap;left:656px;letter-spacing:0.45px;-webkit-text-stroke:0.25px #383838;">Credit Card</div>
<div style="position:absolute;top:1181.22px;font-size:19.0px;line-height:19.0px;color:#383838;font-weight:400;white-space:nowrap;right:1347.00px;letter-spacing:0.5px;-webkit-text-stroke:0.25px #383838;">39</div>
<div style="position:absolute;top:1181.22px;font-size:19.0px;line-height:19.0px;color:#383838;font-weight:400;white-space:nowrap;right:1156.50px;letter-spacing:0.5px;-webkit-text-stroke:0.25px #383838;">17</div>
<div style="position:absolute;top:1181.22px;font-size:19.0px;line-height:19.0px;color:#228222;font-weight:400;white-space:nowrap;right:974.50px;letter-spacing:0.5px;-webkit-text-stroke:0.25px #228222;">$21,323</div>
<div style="position:absolute;top:1181.22px;font-size:19.0px;line-height:19.0px;color:#383838;font-weight:400;white-space:nowrap;right:775.75px;letter-spacing:0.5px;-webkit-text-stroke:0.25px #383838;">22</div>
<div style="position:absolute;top:1181.22px;font-size:19.0px;line-height:19.0px;color:#383838;font-weight:400;white-space:nowrap;right:585.75px;letter-spacing:0.5px;-webkit-text-stroke:0.25px #383838;">20</div>
<div style="position:absolute;top:1181.22px;font-size:19.0px;line-height:19.0px;color:#383838;font-weight:400;white-space:nowrap;right:402.00px;letter-spacing:0.5px;-webkit-text-stroke:0.25px #383838;">$2,346</div>
<div style="position:absolute;left:1408px;top:1206px;width:189px;height:30px;background:#c6efce;"></div>
<div style="position:absolute;top:1211.22px;font-size:19.0px;line-height:19.0px;color:#383838;font-weight:400;white-space:nowrap;left:656px;letter-spacing:0.45px;-webkit-text-stroke:0.25px #383838;">Debt Restructruing</div>
<div style="position:absolute;top:1211.22px;font-size:19.0px;line-height:19.0px;color:#383838;font-weight:400;white-space:nowrap;right:1347.00px;letter-spacing:0.5px;-webkit-text-stroke:0.25px #383838;">14</div>
<div style="position:absolute;top:1211.22px;font-size:19.0px;line-height:19.0px;color:#383838;font-weight:400;white-space:nowrap;right:1156.50px;letter-spacing:0.5px;-webkit-text-stroke:0.25px #383838;">13</div>
<div style="position:absolute;top:1211.22px;font-size:19.0px;line-height:19.0px;color:#228222;font-weight:400;white-space:nowrap;right:974.50px;letter-spacing:0.5px;-webkit-text-stroke:0.25px #228222;">$16,306</div>
<div style="position:absolute;top:1211.22px;font-size:19.0px;line-height:19.0px;color:#383838;font-weight:400;white-space:nowrap;right:775.75px;letter-spacing:0.5px;-webkit-text-stroke:0.25px #383838;">1</div>
<div style="position:absolute;top:1211.22px;font-size:19.0px;line-height:19.0px;color:#383838;font-weight:400;white-space:nowrap;right:585.75px;letter-spacing:0.5px;-webkit-text-stroke:0.25px #383838;">43</div>
<div style="position:absolute;top:1211.22px;font-size:19.0px;line-height:19.0px;color:#383838;font-weight:400;white-space:nowrap;right:402.00px;letter-spacing:0.5px;-webkit-text-stroke:0.25px #383838;">$489</div>
<div style="position:absolute;left:1408px;top:1236px;width:189px;height:30px;background:#c6efce;"></div>
<div style="position:absolute;top:1241.22px;font-size:19.0px;line-height:19.0px;color:#383838;font-weight:400;white-space:nowrap;left:656px;letter-spacing:0.45px;-webkit-text-stroke:0.25px #383838;">Homes Loans</div>
<div style="position:absolute;top:1241.22px;font-size:19.0px;line-height:19.0px;color:#383838;font-weight:400;white-space:nowrap;right:1347.00px;letter-spacing:0.5px;-webkit-text-stroke:0.25px #383838;">132</div>
<div style="position:absolute;top:1241.22px;font-size:19.0px;line-height:19.0px;color:#383838;font-weight:400;white-space:nowrap;right:1156.50px;letter-spacing:0.5px;-webkit-text-stroke:0.25px #383838;">118</div>
<div style="position:absolute;top:1241.22px;font-size:19.0px;line-height:19.0px;color:#228222;font-weight:400;white-space:nowrap;right:974.50px;letter-spacing:0.5px;-webkit-text-stroke:0.25px #228222;">$148,007</div>
<div style="position:absolute;top:1241.22px;font-size:19.0px;line-height:19.0px;color:#383838;font-weight:400;white-space:nowrap;right:775.75px;letter-spacing:0.5px;-webkit-text-stroke:0.25px #383838;">14</div>
<div style="position:absolute;top:1241.22px;font-size:19.0px;line-height:19.0px;color:#383838;font-weight:400;white-space:nowrap;right:585.75px;letter-spacing:0.5px;-webkit-text-stroke:0.25px #383838;">37</div>
<div style="position:absolute;top:1241.22px;font-size:19.0px;line-height:19.0px;color:#383838;font-weight:400;white-space:nowrap;right:402.00px;letter-spacing:0.5px;-webkit-text-stroke:0.25px #383838;">$7,400</div>
<div style="position:absolute;left:1408px;top:1266px;width:189px;height:30px;background:#c6efce;"></div>
<div style="position:absolute;top:1271.22px;font-size:19.0px;line-height:19.0px;color:#383838;font-weight:400;white-space:nowrap;left:656px;letter-spacing:0.45px;-webkit-text-stroke:0.25px #383838;">Vehicle Finance</div>
<div style="position:absolute;top:1271.22px;font-size:19.0px;line-height:19.0px;color:#383838;font-weight:400;white-space:nowrap;right:1347.00px;letter-spacing:0.5px;-webkit-text-stroke:0.25px #383838;">89</div>
<div style="position:absolute;top:1271.22px;font-size:19.0px;line-height:19.0px;color:#383838;font-weight:400;white-space:nowrap;right:1156.50px;letter-spacing:0.5px;-webkit-text-stroke:0.25px #383838;">66</div>
<div style="position:absolute;top:1271.22px;font-size:19.0px;line-height:19.0px;color:#228222;font-weight:400;white-space:nowrap;right:974.50px;letter-spacing:0.5px;-webkit-text-stroke:0.25px #228222;">$82,784</div>
<div style="position:absolute;top:1271.22px;font-size:19.0px;line-height:19.0px;color:#383838;font-weight:400;white-space:nowrap;right:775.75px;letter-spacing:0.5px;-webkit-text-stroke:0.25px #383838;">23</div>
<div style="position:absolute;top:1271.22px;font-size:19.0px;line-height:19.0px;color:#383838;font-weight:400;white-space:nowrap;right:585.75px;letter-spacing:0.5px;-webkit-text-stroke:0.25px #383838;">45</div>
<div style="position:absolute;top:1271.22px;font-size:19.0px;line-height:19.0px;color:#383838;font-weight:400;white-space:nowrap;right:402.00px;letter-spacing:0.5px;-webkit-text-stroke:0.25px #383838;">$4,139</div>
<div style="position:absolute;left:529px;top:1295px;width:1640px;height:2px;background:#5a5a5a;"></div>
<div style="position:absolute;top:1301.22px;font-size:19.0px;line-height:19.0px;color:#1a1a1a;font-weight:700;white-space:nowrap;left:531px;letter-spacing:0.1px;">Total</div>
<div style="position:absolute;top:1301.22px;font-size:19.0px;line-height:19.0px;color:#1a1a1a;font-weight:700;white-space:nowrap;right:1346.90px;letter-spacing:0.6px;">532</div>
<div style="position:absolute;top:1301.22px;font-size:19.0px;line-height:19.0px;color:#1a1a1a;font-weight:700;white-space:nowrap;right:1156.40px;letter-spacing:0.6px;">407</div>
<div style="position:absolute;top:1301.22px;font-size:19.0px;line-height:19.0px;color:#1a1a1a;font-weight:700;white-space:nowrap;right:974.40px;letter-spacing:0.6px;">$510,500</div>
<div style="position:absolute;top:1301.22px;font-size:19.0px;line-height:19.0px;color:#1a1a1a;font-weight:700;white-space:nowrap;right:775.65px;letter-spacing:0.6px;">125</div>
<div style="position:absolute;top:1301.22px;font-size:19.0px;line-height:19.0px;color:#1a1a1a;font-weight:700;white-space:nowrap;right:585.65px;letter-spacing:0.6px;">219</div>
<div style="position:absolute;top:1301.22px;font-size:19.0px;line-height:19.0px;color:#1a1a1a;font-weight:700;white-space:nowrap;right:401.90px;letter-spacing:0.6px;">$34,932</div>
<div style="position:absolute;left:406px;top:1325px;width:1763px;height:2px;background:#5a5a5a;"></div>
<div style="position:absolute;left:406px;top:1355px;width:1763px;height:2px;background:#5a5a5a;"></div>
<div style="position:absolute;top:1331.22px;font-size:19.0px;line-height:19.0px;color:#1a1a1a;font-weight:700;white-space:nowrap;left:410px;letter-spacing:0.1px;">Grand Total</div>
<div style="position:absolute;top:1331.22px;font-size:19.0px;line-height:19.0px;color:#1a1a1a;font-weight:700;white-space:nowrap;right:1346.90px;letter-spacing:0.6px;">5885</div>
<div style="position:absolute;top:1331.22px;font-size:19.0px;line-height:19.0px;color:#1a1a1a;font-weight:700;white-space:nowrap;right:1156.40px;letter-spacing:0.6px;">3723</div>
<div style="position:absolute;top:1331.22px;font-size:19.0px;line-height:19.0px;color:#1a1a1a;font-weight:700;white-space:nowrap;right:974.40px;letter-spacing:0.6px;">$4,669,759</div>
<div style="position:absolute;top:1331.22px;font-size:19.0px;line-height:19.0px;color:#1a1a1a;font-weight:700;white-space:nowrap;right:775.65px;letter-spacing:0.6px;">2162</div>
<div style="position:absolute;top:1331.22px;font-size:19.0px;line-height:19.0px;color:#1a1a1a;font-weight:700;white-space:nowrap;right:585.65px;letter-spacing:0.6px;">1885</div>
<div style="position:absolute;top:1331.22px;font-size:19.0px;line-height:19.0px;color:#1a1a1a;font-weight:700;white-space:nowrap;right:401.90px;letter-spacing:0.6px;">$290,283</div>
</div></div>
</body></html>
